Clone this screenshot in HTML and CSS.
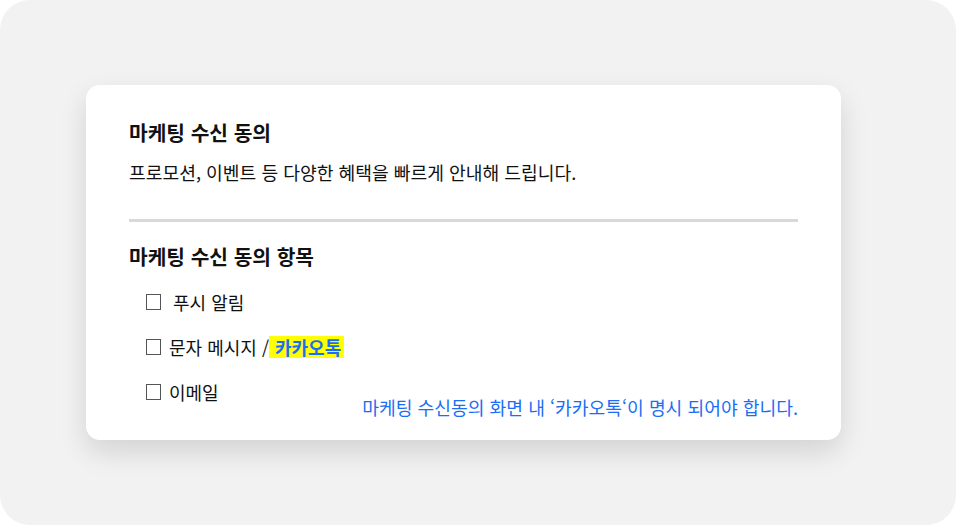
FILE: index.html
```html
<!DOCTYPE html>
<html lang="ko">
<head>
    <meta charset="UTF-8">
    <meta name="viewport" content="width=device-width, initial-scale=1.0">
    <title>마케팅 수신 동의</title>
    <link rel="stylesheet" href="styles.css">
</head>
<body>
    <div class="frame">
        <div class="card">
            <h1 class="title">마케팅 수신 동의</h1>
            <p class="desc">프로모션, 이벤트 등 다양한 혜택을 빠르게 안내해 드립니다.</p>

            <hr class="divider">

            <h2 class="title sub">마케팅 수신 동의 항목</h2>

            <div class="footer">
                <ul class="options">
                    <li><span class="box"></span><span class="label wide">푸시 알림</span></li>
                    <li><span class="box"></span><span class="label">문자 메시지 /<mark class="kakao">카카오톡</mark></span></li>
                    <li><span class="box"></span><span class="label">이메일</span></li>
                </ul>
                <p class="note">마케팅 수신동의 화면 내 ‘카카오톡‘이 명시 되어야 합니다.</p>
            </div>
        </div>
    </div>
</body>
</html>
```

FILE: styles.css
```css
body {
    margin: 0;
    background-color: #fff;
    font-family: "Noto Sans CJK KR", "Noto Sans", sans-serif;
    color: #111;
}

.frame {
    width: 956px;
    height: 525px;
    box-sizing: border-box;
    padding: 85px 115px 85px 86px;
    background-color: #f2f2f2;
    border-radius: 30px;
}

.card {
    background-color: #fff;
    border-radius: 14px;
    padding: 35px 43px 21px;
    box-shadow: 0 12px 28px rgba(0, 0, 0, 0.13);
}

.title {
    margin: 0;
    font-size: 20.3px;
    line-height: 24px;
    font-weight: 700;
}

.desc {
    margin: 16px 0 0;
    font-size: 18.2px;
    line-height: 24px;
}

.divider {
    margin: 35px 0 0;
    border: none;
    height: 3px;
    background-color: #d9d9d9;
}

.sub {
    margin-top: 22px;
}

.footer {
    display: flex;
    justify-content: space-between;
    align-items: flex-end;
}

.options {
    list-style: none;
    margin: 22px 0 0;
    padding: 0 0 15px 17px;
    display: flex;
    flex-direction: column;
    gap: 21px;
}

.options li {
    display: flex;
    align-items: center;
    font-size: 18px;
    line-height: 24px;
}

.box {
    width: 13px;
    height: 14px;
    border: 1px solid #555;
    margin-right: 8px;
}

.label.wide {
    margin-left: 4px;
}

.kakao {
    background-color: #ffff00;
    color: #1a6ef5;
    font-weight: 700;
    padding: 0 3px 0 6px;
    line-height: 22px;
    display: inline-block;
}

.note {
    margin: 0;
    font-size: 18.2px;
    line-height: 24px;
    color: #1a6ef5;
}
```
